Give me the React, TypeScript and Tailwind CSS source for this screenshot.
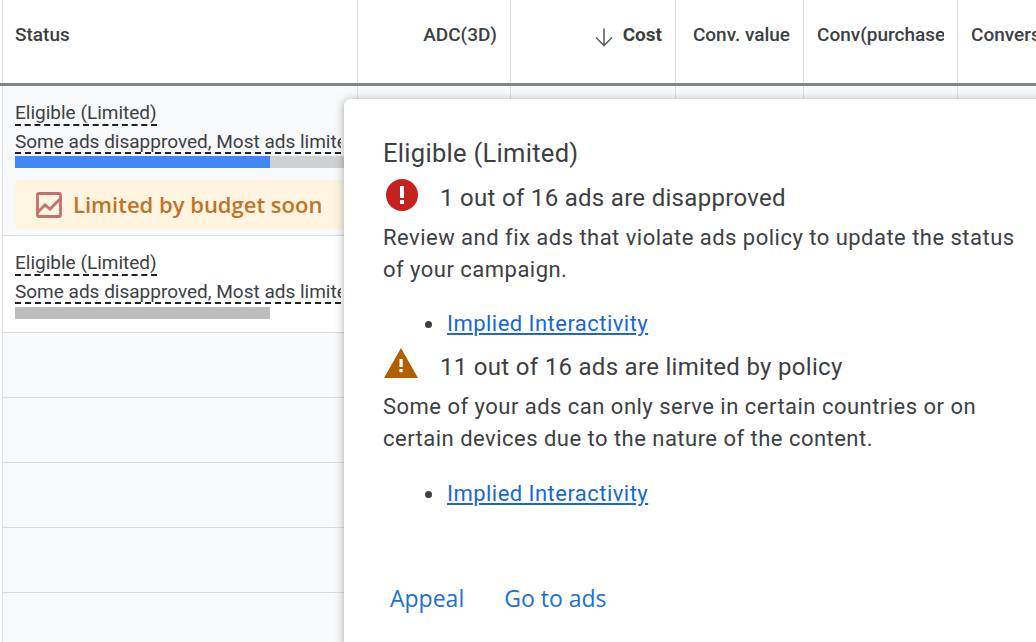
import React from 'react';

const COLUNAS = [
  { w: 'w-[355px]', label: 'Status', cls: 'justify-start pl-[12px]' },
  { w: 'w-[153px]', label: 'ADC(3D)', cls: 'justify-end pr-[13px]' },
  { w: 'w-[165px]', label: 'Cost', cls: 'justify-end pr-[13px]' },
  { w: 'w-[128px]', label: 'Conv. value', cls: 'justify-end pr-[13px]' },
  { w: 'w-[154px]', label: 'Conv(purchase', cls: 'justify-start pl-[13px] pr-[13px]' },
  { w: 'w-[80px]', label: 'Conversions', cls: 'justify-start pl-[13px]' },
];

const CelulasVazias: React.FC = () => (
  <>
    <div className="w-[153px] shrink-0 border-r border-[#dadce0]" />
    <div className="w-[165px] shrink-0 border-r border-[#dadce0]" />
    <div className="w-[128px] shrink-0 border-r border-[#dadce0]" />
    <div className="w-[154px] shrink-0 border-r border-[#dadce0]" />
    <div className="w-[80px] shrink-0" />
  </>
);

const StatusTexto: React.FC = () => (
  <>
    <div className="h-[25px] text-[19px] leading-[23px] text-[#3c4043]">
      <span className="inline-block h-[25px] border-b-2 border-dashed border-[#202124]">Eligible (Limited)</span>
    </div>
    <div className="mt-[3px] h-[25px] w-[326px] overflow-hidden border-b-2 border-dashed border-[#202124] whitespace-nowrap text-[19px] leading-[25px] text-[#3c4043]">
      Some ads disapproved, Most ads limited by policy
    </div>
  </>
);

const LinhaVazia: React.FC = () => (
  <div className="flex h-[65px] border-b border-[#dadce0] bg-[#f8f9fa]">
    <div className="w-[355px] shrink-0 border-r border-[#dadce0]" />
    <CelulasVazias />
  </div>
);

const Topico: React.FC<{ topo: string }> = ({ topo }) => (
  <ul className={`ml-[46px] ${topo} h-[32px] list-disc pl-[16px] text-[22px] leading-[32px] tracking-[0.46px] marker:text-[#3c4043]`}>
    <li className="pl-[2px]">
      <a href="#" className="text-[#1967d2] underline">Implied Interactivity</a>
    </li>
  </ul>
);

export default function App() {
  return (
    <div className="relative h-[642px] w-[1036px] overflow-hidden bg-white font-['Roboto',sans-serif]">
      <div className="ml-[2px] border-l border-[#dadce0]">
        {/* Cabeçalho */}
        <div className="flex h-[83px]">
          {COLUNAS.map(c => (
            <div
              key={c.label}
              className={`${c.w} flex shrink-0 items-center whitespace-nowrap border-r border-[#dadce0] pb-[13px] text-[19px] font-medium text-[#3c4043] ${c.cls}`}
            >
              {c.label === 'Cost' && (
                <svg viewBox="0 0 22 22" className="mr-[8px] mt-[3px] h-[22px] w-[22px] shrink-0" fill="none" stroke="#5f6368" strokeWidth="1.6">
                  <path d="M11 2.5v17M3 11.5l8 8 8-8" />
                </svg>
              )}
              <span className={c.label === 'Cost' ? 'font-bold' : 'min-w-0 overflow-hidden'}>{c.label}</span>
            </div>
          ))}
        </div>
        <div className="-ml-[3px] h-[3px] bg-[#80868b]" />

        {/* Linha 1 */}
        <div className="flex h-[150px] border-b border-[#dadce0] bg-[#f8f9fa]">
          <div className="w-[355px] shrink-0 border-r border-[#dadce0] pl-[12px] pt-[15px]">
            <StatusTexto />
            <div className="mt-[2px] flex h-[12px] w-[340px] bg-[#cfd0d2]">
              <div className="h-full w-[255px] bg-[#4285f4]" />
            </div>
            <div className="mt-[12px] flex h-[49px] w-[328px] items-center rounded-[2px] bg-[#fef4e0] pl-[21px] font-['Open_Sans',sans-serif] font-semibold text-[#bf7328]">
              <svg viewBox="0 0 26 26" className="mr-[11px] h-[26px] w-[26px] shrink-0" fill="none" stroke="#c2716a" strokeWidth="2.8">
                <rect x="1.5" y="1.5" width="23" height="23" rx="1.5" />
                <path d="M2 20l7-7 5 4 10-10" />
              </svg>
              <span className="whitespace-nowrap text-[22px]">Limited by budget soon</span>
            </div>
          </div>
          <CelulasVazias />
        </div>

        {/* Linha 2 */}
        <div className="flex h-[97px] border-b border-[#dadce0]">
          <div className="w-[355px] shrink-0 border-r border-[#dadce0] pl-[12px] pt-[15px]">
            <StatusTexto />
            <div className="mt-[3px] h-[12px] w-[255px] bg-[#bdbdbd]" />
          </div>
          <CelulasVazias />
        </div>

        <LinhaVazia />
        <LinhaVazia />
        <LinhaVazia />
        <LinhaVazia />
        <LinhaVazia />
      </div>

      {/* Popover */}
      <div className="absolute left-[344px] top-[99px] h-[600px] w-[760px] rounded-tl-[6px] bg-white pl-[39px] pt-[37px] text-[#3c4043] shadow-[0_1px_8px_rgba(60,64,67,0.45)]">
        <div className="h-[34px] text-[25.5px] leading-[34px] tracking-[0.3px]">Eligible (Limited)</div>
        <div className="mt-[8px] flex h-[40px] items-center text-[24px] tracking-[0.3px]">
          <svg viewBox="0 0 34 34" className="ml-[2px] mr-[21px] -mt-[6px] h-[34px] w-[34px] shrink-0">
            <circle cx="17" cy="17" r="16" fill="#c5221f" />
            <rect x="15" y="8" width="4" height="12" fill="#fff" />
            <rect x="15" y="22" width="4" height="4" fill="#fff" />
          </svg>
          1 out of 16 ads are disapproved
        </div>
        <p className="mt-[4px] w-[640px] text-[22px] leading-[32px] tracking-[0.48px]">
          Review and fix ads that violate ads policy to update the status of your campaign.
        </p>
        <Topico topo="mt-[22px]" />
        <div className="mt-[7px] flex h-[40px] items-center text-[24px] tracking-[0.3px]">
          <svg viewBox="0 0 36 32" className="mr-[21px] -mt-[8px] h-[32px] w-[36px] shrink-0">
            <path d="M18 1L35 31H1z" fill="#b06000" />
            <rect x="16.5" y="12" width="3.2" height="8" fill="#fff" />
            <rect x="16.5" y="22" width="3.2" height="3.2" fill="#fff" />
          </svg>
          11 out of 16 ads are limited by policy
        </div>
        <p className="mt-[4px] w-[640px] text-[22px] leading-[32px] tracking-[0.48px]">
          Some of your ads can only serve in certain countries or on certain devices due to the nature of the content.
        </p>
        <Topico topo="mt-[23px]" />
        <div className="ml-[7px] mt-[71px] flex gap-[40px] font-['Open_Sans',sans-serif] text-[23px] font-medium text-[#1b6fd6]">
          <span>Appeal</span>
          <span>Go to ads</span>
        </div>
      </div>
    </div>
  );
}
